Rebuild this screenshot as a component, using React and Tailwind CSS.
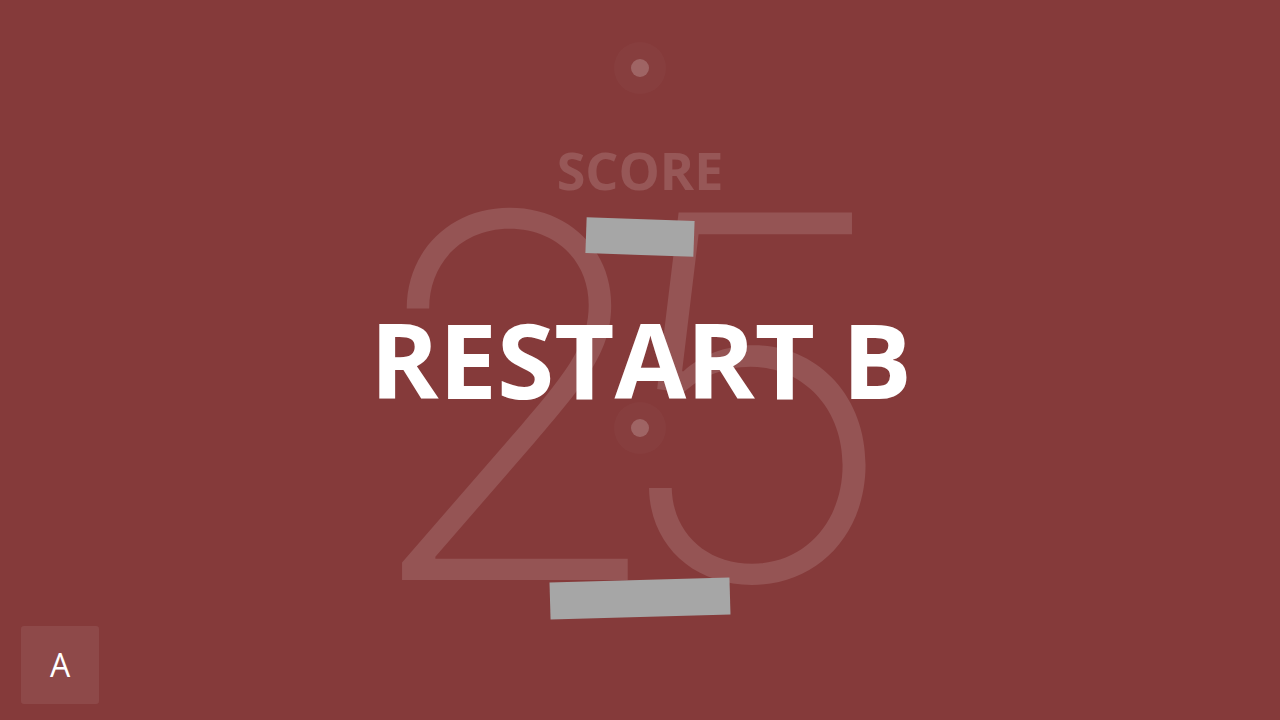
const Dot = () => (
  <div className="flex h-[52px] w-[52px] items-center justify-center rounded-full bg-white/[0.025]">
    <div className="h-[18px] w-[18px] rounded-full bg-white/20" />
  </div>
);

export default function App() {
  return (
    <div
      className="relative h-[720px] w-full overflow-hidden bg-[#853a3a]"
      style={{ fontFamily: '"Open Sans", "Noto Sans", sans-serif' }}
    >
      {/* big score behind */}
      <div className="pointer-events-none absolute inset-0 flex items-center justify-center">
        <span
          className="-translate-x-[42px] translate-y-[36px] text-[505px] leading-none font-extralight tracking-[-62px] text-white/[0.13]"
          style={{ fontFamily: 'Inter, "Noto Sans", sans-serif' }}
        >
          25
        </span>
      </div>

      {/* score column */}
      <div className="relative flex flex-col items-center pt-[42px]">
        <Dot />
        <div className="mt-[50px] text-[52px] leading-none font-bold text-white/15">SCORE</div>
        <div className="mt-[23px] h-[36px] w-[108px] rotate-[2deg] bg-[#a6a6a6]" />
        <div className="mt-[147px]">
          <Dot />
        </div>
        <div className="mt-[126px] h-[37px] w-[180px] -rotate-[1.6deg] bg-[#a6a6a6]" />
      </div>

      {/* restart label */}
      <div className="pointer-events-none absolute inset-0 flex items-center justify-center">
        <span className="translate-x-[1px] -translate-y-[1px] text-[104px] leading-none font-bold text-white">RESTART B</span>
      </div>

      {/* A button */}
      <button className="absolute bottom-[16px] left-[21px] flex h-[78px] w-[78px] items-center justify-center rounded-[3px] bg-white/[0.08] text-[32px] leading-none text-white">
        A
      </button>
    </div>
  );
}
